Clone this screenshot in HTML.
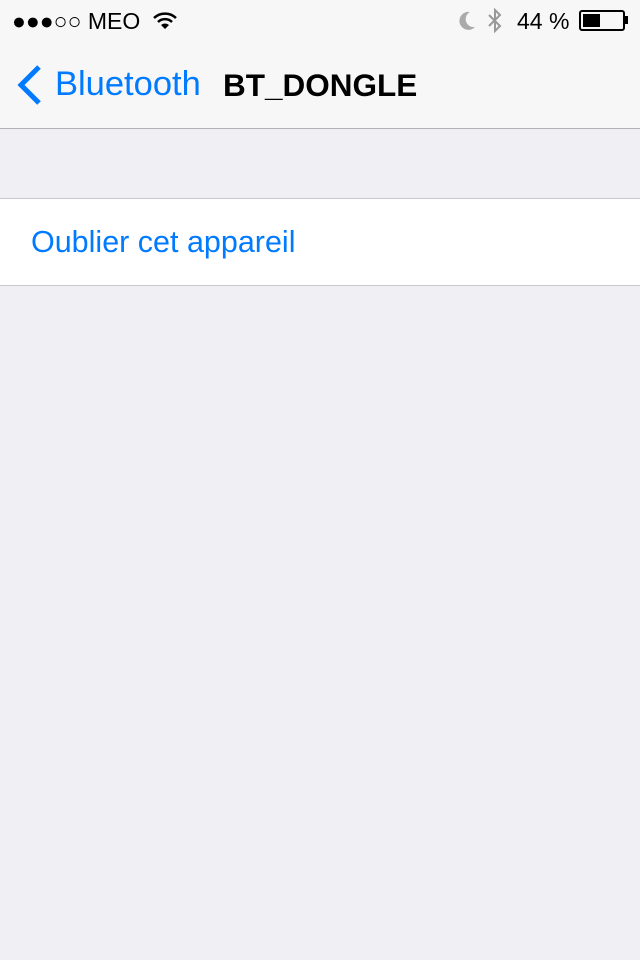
<!DOCTYPE html>
<html><head><style>
body{margin:0;width:640px;height:960px;background:#efeff4;font-family:"Liberation Sans",sans-serif;position:relative;overflow:hidden}
.bar{position:absolute;left:0;top:0;width:640px;height:128px;background:#f7f7f7;border-bottom:1px solid #b2b2b2}
.t{position:absolute;white-space:nowrap}
</style></head><body>
<div class="bar"></div>
<div class="t" style="left:12px;top:8px;font-size:23px;color:#000">●●●○○ MEO</div>
<svg class="t" style="left:152px;top:10px" width="26" height="22" viewBox="0 0 26 22"><path d="M2 8a16 16 0 0 1 22 0M6 12a10 10 0 0 1 14 0" stroke="#000" stroke-width="2.5" fill="none"/><path d="M9 15l4 4 4-4a6 6 0 0 0-8 0z" fill="#000"/></svg>
<svg class="t" style="left:456px;top:10px" width="20" height="22"><path d="M14 2a9 9 0 1 0 5 15a8 8 0 0 1-5-15z" fill="#aaa"/></svg>
<svg class="t" style="left:486px;top:7px" width="18" height="28"><path d="M3 8l11 11-5 5V3l5 5-11 11" stroke="#999" stroke-width="2" fill="none"/></svg>
<div class="t" style="left:517px;top:8px;font-size:23px;color:#000">44 %</div>
<div class="t" style="left:579px;top:10px;width:42px;height:17px;border:2px solid #000;border-radius:3px"><div style="margin:2px;width:17px;height:13px;background:#000"></div></div>
<div class="t" style="left:625px;top:16px;width:3px;height:8px;background:#000"></div>
<svg class="t" style="left:14px;top:64px" width="30" height="42"><path d="M25 3L7 21l18 18" stroke="#007aff" stroke-width="5" fill="none"/></svg>
<div class="t" style="left:55px;top:65px;font-size:34.5px;color:#007aff">Bluetooth</div>
<div class="t" style="left:223px;top:67px;font-size:31.5px;color:#000;font-weight:bold">BT_DONGLE</div>
<div class="t" style="left:0;top:198px;width:640px;height:86px;background:#fff;border-top:1px solid #c8c7cc;border-bottom:1px solid #c8c7cc"></div>
<div class="t" style="left:31px;top:225px;font-size:30.5px;color:#007aff">Oublier cet appareil</div>
</body></html>
